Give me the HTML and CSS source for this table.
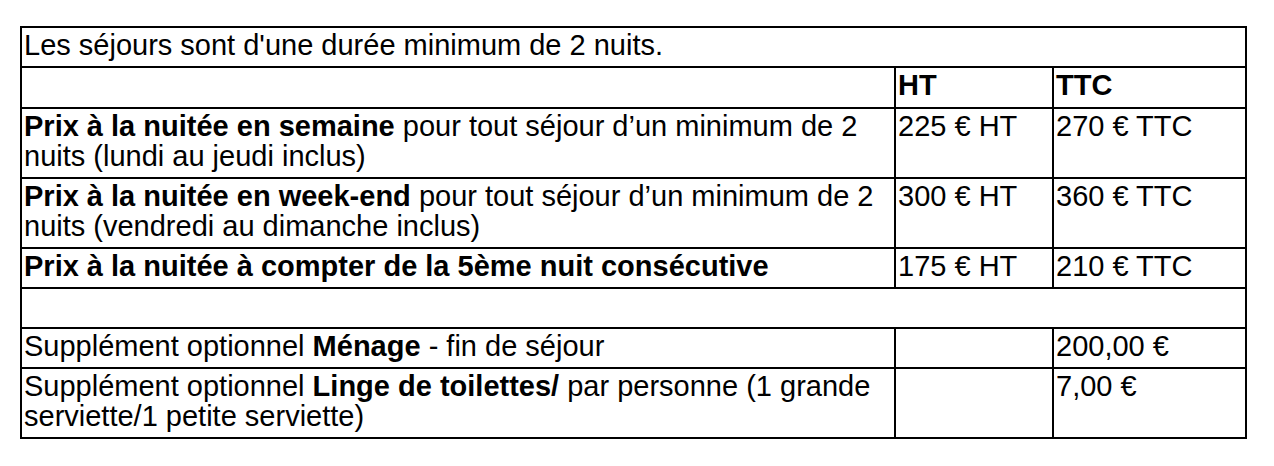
FILE: index.html
```html
<!DOCTYPE html>
<html lang="fr">
<head>
<meta charset="utf-8">
<title>Tarifs</title>
<link rel="stylesheet" href="styles.css">
</head>
<body>
<table class="tarifs">
  <colgroup>
    <col class="c-desc">
    <col class="c-ht">
    <col class="c-ttc">
  </colgroup>
  <tbody>
    <tr>
      <td colspan="3">Les séjours sont d'une durée minimum de 2 nuits.</td>
    </tr>
    <tr class="head">
      <td></td>
      <td><b>HT</b></td>
      <td><b>TTC</b></td>
    </tr>
    <tr>
      <td><b>Prix à la nuitée en semaine</b> pour tout séjour d’un minimum de 2 nuits (lundi au jeudi inclus)</td>
      <td>225 € HT</td>
      <td>270 € TTC</td>
    </tr>
    <tr>
      <td><b>Prix à la nuitée en week-end</b> pour tout séjour d’un minimum de 2 nuits (vendredi au dimanche inclus)</td>
      <td>300 € HT</td>
      <td>360 € TTC</td>
    </tr>
    <tr>
      <td><b>Prix à la nuitée à compter de la 5ème nuit consécutive</b></td>
      <td>175 € HT</td>
      <td>210 € TTC</td>
    </tr>
    <tr class="empty">
      <td colspan="3"></td>
    </tr>
    <tr>
      <td>Supplément optionnel <b>Ménage</b> - fin de séjour</td>
      <td></td>
      <td>200,00 €</td>
    </tr>
    <tr>
      <td>Supplément optionnel <b>Linge de toilettes/</b> par personne (1 grande serviette/1 petite serviette)</td>
      <td></td>
      <td>7,00 €</td>
    </tr>
  </tbody>
</table>
</body>
</html>
```

FILE: styles.css
```css
html, body {
  margin: 0;
  padding: 0;
  background: #ffffff;
}

body {
  padding: 26px 0 0 20px;
  font-family: "Liberation Sans", Arial, Helvetica, sans-serif;
  color: #000000;
}

.tarifs {
  border-collapse: collapse;
  table-layout: fixed;
  width: 1227px;
  border: 2px solid #000;
  font-size: 29px;
  line-height: 30px;
}

.c-desc { width: 874px; }
.c-ht { width: 158px; }
.c-ttc { width: 193px; }

.tarifs td {
  border: 2px solid #000;
  padding: 2px 2px 6px 2px;
  vertical-align: top;
  height: 30px;
}

.tarifs .head td {
  height: 31px;
}

.tarifs b {
  font-weight: bold;
}
```
